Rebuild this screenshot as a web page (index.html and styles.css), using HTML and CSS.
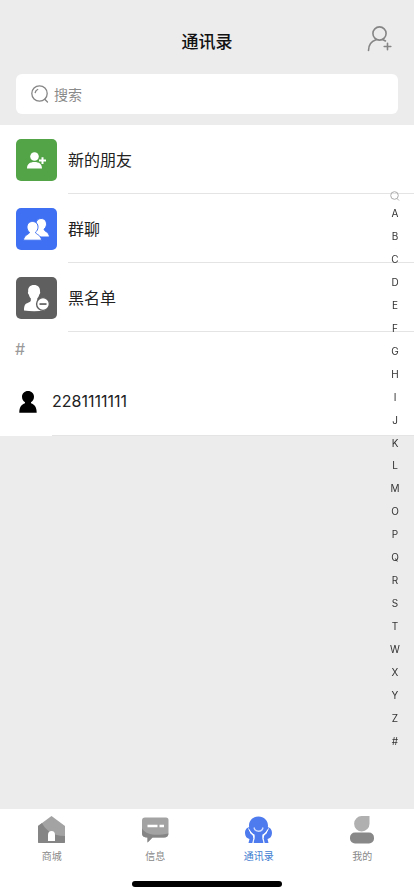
FILE: index.html
```html
<!DOCTYPE html>
<html lang="zh-CN">
<head>
<meta charset="utf-8">
<meta name="viewport" content="width=device-width, initial-scale=1">
<title>通讯录</title>
<link rel="stylesheet" href="styles.css">
</head>
<body>
<header class="header">
  <h1 class="title">通讯录</h1>
  <button class="add" type="button" aria-label="添加朋友">
    <svg width="26" height="28" viewBox="0 0 26 28" fill="none" stroke="#858585" stroke-width="1.6" stroke-linecap="round">
      <circle cx="12.500" cy="7.500" r="6.600"/>
      <path d="M1.500 24.500C1.500 18.500 5 15 9 13.700M16 13.700L18.500 15M20.500 17.200V23.800M17.200 20.500H23.800"/>
    </svg>
  </button>
</header>

<label class="search">
  <svg width="18" height="18" viewBox="0 0 18 18" fill="none" stroke="#858585" stroke-width="1.300" stroke-linecap="round">
    <circle cx="8.500" cy="8.500" r="7.700"/>
    <path d="M13.700 14.200L16.500 17M4.200 7.500C4.600 5.900 5.500 5 6.700 4.500"/>
  </svg>
  <input class="search-input" type="search" placeholder="搜索" aria-label="搜索">
</label>

<main class="contacts">
  <a class="row" href="#new">
    <span class="tile tile-green">
      <svg width="41" height="42" viewBox="0 0 41 42" fill="#fff">
        <circle cx="18.500" cy="17.500" r="4.300"/>
        <path d="M11 29.500C11 25 14 23 18.500 23S26 25 26 29.500ZM25.500 18.200V20.500H23V22.500H25.500V25H27.500V22.500H30V20.500H27.500V18.200Z"/>
      </svg>
    </span>
    <span class="name">新的朋友</span>
  </a>
  <a class="row" href="#groups">
    <span class="tile tile-blue">
      <svg width="41" height="42" viewBox="0 0 41 42" fill="#fff" stroke="#3f70f3">
        <path d="M25 10.500C28.500 10.500 30.700 13 30.500 16.300C30.400 18.500 29.400 20.200 28 21.200C28.300 23.800 33 23.400 33.500 29H18L20 16C20 12.700 22 10.500 25 10.500Z"/>
        <path d="M16.500 13.500C20 13.500 22.200 16 22 19.300C21.900 21.500 20.900 23.200 19.500 24.200C19.800 26.800 25 26.400 25.500 32.200H7.500C8 26.400 13.200 26.800 13.500 24.200C12 23.200 11 21.500 11 19.300C10.800 16 13 13.500 16.500 13.500Z"/>
      </svg>
    </span>
    <span class="name">群聊</span>
  </a>
  <a class="row" href="#blocked">
    <span class="tile tile-gray">
      <svg width="41" height="42" viewBox="0 0 41 42" fill="#fff">
        <path d="M18 8C22 8 24.300 10.500 24 14.500C24.500 15.500 24 17 23.200 17.700C22.800 19.500 22 20.600 21.300 21.300V23.500C22.500 25.300 27 25 28.500 28V33.500Q18 35 8 33.500C8 27.500 9.500 26.800 12 25.700C13.700 25 14.700 24.500 14.800 23.500V21.300C13.800 20.500 13.200 19.200 12.900 17.700C12 17 11.600 15.500 12.200 14.500C11.800 10.500 14 8 18 8Z"/>
        <circle cx="27" cy="27" r="6.400" stroke="#5f5f5f" stroke-width="1.400"/>
        <path d="M23.500 26.200H30.500V27.900H23.500Z" fill="#5f5f5f"/>
      </svg>
    </span>
    <span class="name">黑名单</span>
  </a>
  <h2 class="section">#</h2>
  <a class="row row-person" href="#person">
    <svg class="avatar" width="24" height="24" viewBox="0 0 24 24">
      <path d="M12 1C15.500 1 18 3.500 18 6.700C18 9.400 16.800 11 15 12.200V13.300C18.500 14.500 20.700 17 20.700 22.700H3.300C3.300 17 5.500 14.500 9 13.300V12.200C7.200 11 6 9.400 6 6.700C6 3.500 8.500 1 12 1Z"/>
    </svg>
    <span class="name">2281111111</span>
  </a>
</main>

<nav class="index" aria-label="字母索引">
  <svg width="10" height="10" viewBox="0 0 10 10" fill="none" stroke="#aaa"><circle cx="4.500" cy="4.500" r="3.800"/><path d="M7 7.500L9 9.500"/></svg>
  <a href="#A">A</a><a href="#B">B</a><a href="#C">C</a><a href="#D">D</a><a href="#E">E</a><a href="#F">F</a><a href="#G">G</a><a href="#H">H</a><a href="#I">I</a><a href="#J">J</a><a href="#K">K</a><a href="#L">L</a><a href="#M">M</a><a href="#O">O</a><a href="#P">P</a><a href="#Q">Q</a><a href="#R">R</a><a href="#S">S</a><a href="#T">T</a><a href="#W">W</a><a href="#X">X</a><a href="#Y">Y</a><a href="#Z">Z</a><a href="#other">#</a>
</nav>

<footer class="tabbar">
  <nav class="tabs">
    <a class="tab" href="#shop">
      <svg width="28" height="28" viewBox="0 0 28 28">
        <path d="M13.500 0L27 10V26Q27 27 26 27H1Q0 27 0 26V10Z" fill="#a3a3a3"/>
        <path d="M0 10L4 7C6.500 12 13 20 27 20V26Q27 27 26 27H1Q0 27 0 26Z" fill="#858585"/>
        <path d="M10 25V19A3.500 4 0 0 1 17 19V25Z" fill="#fff"/>
      </svg>
      商城
    </a>
    <a class="tab" href="#messages">
      <svg width="28" height="28" viewBox="0 0 28 28">
        <path d="M4 1.500H25Q27.500 1.500 27.500 4V17Q27.500 21.500 23 21.500H11.500L6.500 26.500V21.500Q1 21.500 1 17.500V4.500Q1 1.500 4 1.500Z" fill="#a3a3a3"/>
        <path d="M1 12.500C5 19 15 20 27.500 17.500Q27 21.500 23 21.500H11.500L6.500 26.500V21.500Q1 21.500 1 17.500Z" fill="#858585"/>
        <path d="M6.500 10H16.500M18.500 10H23" stroke="#fff" stroke-width="2.400"/>
      </svg>
      信息
    </a>
    <a class="tab tab-active" href="#contacts" aria-current="page">
      <svg width="28" height="28" viewBox="0 0 28 28">
        <path d="M5 11C1.500 11.500 0 14 0 17C0 20.500 2 22.500 4.500 23L3.500 27H8C9.500 22 9 20 5 17ZM22 11C25.500 11.500 27 14 27 17C27 20.500 25 22.500 22.500 23L23.500 27H19C17.500 22 18 20 22 17Z" fill="#4e7bed"/>
        <path d="M13.500 .5C19 .5 23 4.500 23 9.700C23 14 20.500 17 17.500 18.500C17 21 17.500 24 18.500 27H8.500C9.500 24 10 21 9.500 18.500C6.500 17 4 14 4 9.700C4 4.500 8 .5 13.500 .5Z" fill="#4e7bed"/>
        <path d="M9 11.500C10 16.500 17 16.500 18 11.500" fill="none" stroke="#cfdcff" stroke-width="1.400"/>
        <path d="M3.500 12.500Q5 17 8.500 19Q9.500 22 7.800 27M23.500 12.500Q22 17 18.500 19Q17.500 22 19.200 27" fill="none" stroke="#fff"/>
      </svg>
      通讯录
    </a>
    <a class="tab" href="#me">
      <svg width="28" height="28" viewBox="0 0 28 28">
        <path d="M14 0H21.500V7.500A7.700 7.700 0 1 1 14 0Z" fill="#b0b0b0"/>
        <rect x="2" y="16.500" width="24" height="11" rx="5" fill="#888"/>
      </svg>
      我的
    </a>
  </nav>
  <div class="home-bar"></div>
</footer>
</body>
</html>
```

FILE: styles.css
```css
* {
  box-sizing: border-box;
}

body {
  margin: 0;
  min-height: 100vh;
  display: flex;
  flex-direction: column;
  background: #ececec;
  color: #222;
  font-family: Inter, "Noto Sans CJK SC", sans-serif;
  font-size: 16px;
}

a {
  color: inherit;
  text-decoration: none;
}

svg {
  display: block;
  flex: none;
}

.header {
  display: grid;
  grid-template-columns: 1fr auto 1fr;
  align-items: center;
  padding: 20px 21px 10px;
}

.title {
  grid-column: 2;
  margin: 0;
  font-size: 17px;
  font-weight: 500;
  line-height: 44px;
  color: #111;
}

.add {
  justify-self: end;
  align-self: start;
  padding: 6px 0 0;
  border: 0;
  background: none;
}

.search {
  display: flex;
  align-items: center;
  gap: 5px;
  height: 40px;
  margin: 0 16px 11px;
  padding: 0 15px;
  border-radius: 6px;
  background: #fff;
}

.search-input {
  flex: 1;
  min-width: 0;
  padding: 0;
  border: 0;
  outline: 0;
  background: none;
  font: inherit;
  font-size: 14px;
}

.search-input::placeholder {
  color: #8a8a8a;
}

.contacts {
  background: #fff;
}

.row {
  display: flex;
  gap: 11px;
  padding-left: 16px;
  align-items: center;
}

.tile {
  flex: none;
  border-radius: 5px;
}

.tile-green {
  background: #52a447;
}

.tile-blue {
  background: #3f70f3;
}

.tile-gray {
  background: #5f5f5f;
}

.name {
  flex: 1;
  padding-top: 2px;
  line-height: 66px;
  border-bottom: 1px solid #e4e4e4;
}

.section {
  margin: 0;
  padding-left: 15px;
  font-size: 16px;
  font-weight: 400;
  line-height: 35px;
  color: #999;
}

.row-person {
  gap: 12px;
}

.row-person .name {
  padding-top: 0;
  line-height: 68px;
}

.index {
  position: fixed;
  top: 191px;
  right: 8px;
  bottom: 144px;
  width: 22px;
  display: flex;
  flex-direction: column;
  align-items: center;
  gap: 1px;
  font-size: 10px;
  color: #333;
}

.index a {
  flex: 1;
  display: flex;
  align-items: center;
}

.tabbar {
  margin-top: auto;
  padding-bottom: 9px;
  background: #fff;
}

.tabs {
  display: grid;
  grid-template-columns: repeat(4, 1fr);
  padding-top: 7px;
}

.tab {
  display: flex;
  flex-direction: column;
  align-items: center;
  gap: 4px;
  font-size: 10px;
  line-height: 16px;
  color: #888;
}

.tab-active {
  color: #3c7bd0;
}

.home-bar {
  width: 36%;
  height: 6px;
  margin: 17px auto 0;
  border-radius: 3px;
  background: #000;
}
```
